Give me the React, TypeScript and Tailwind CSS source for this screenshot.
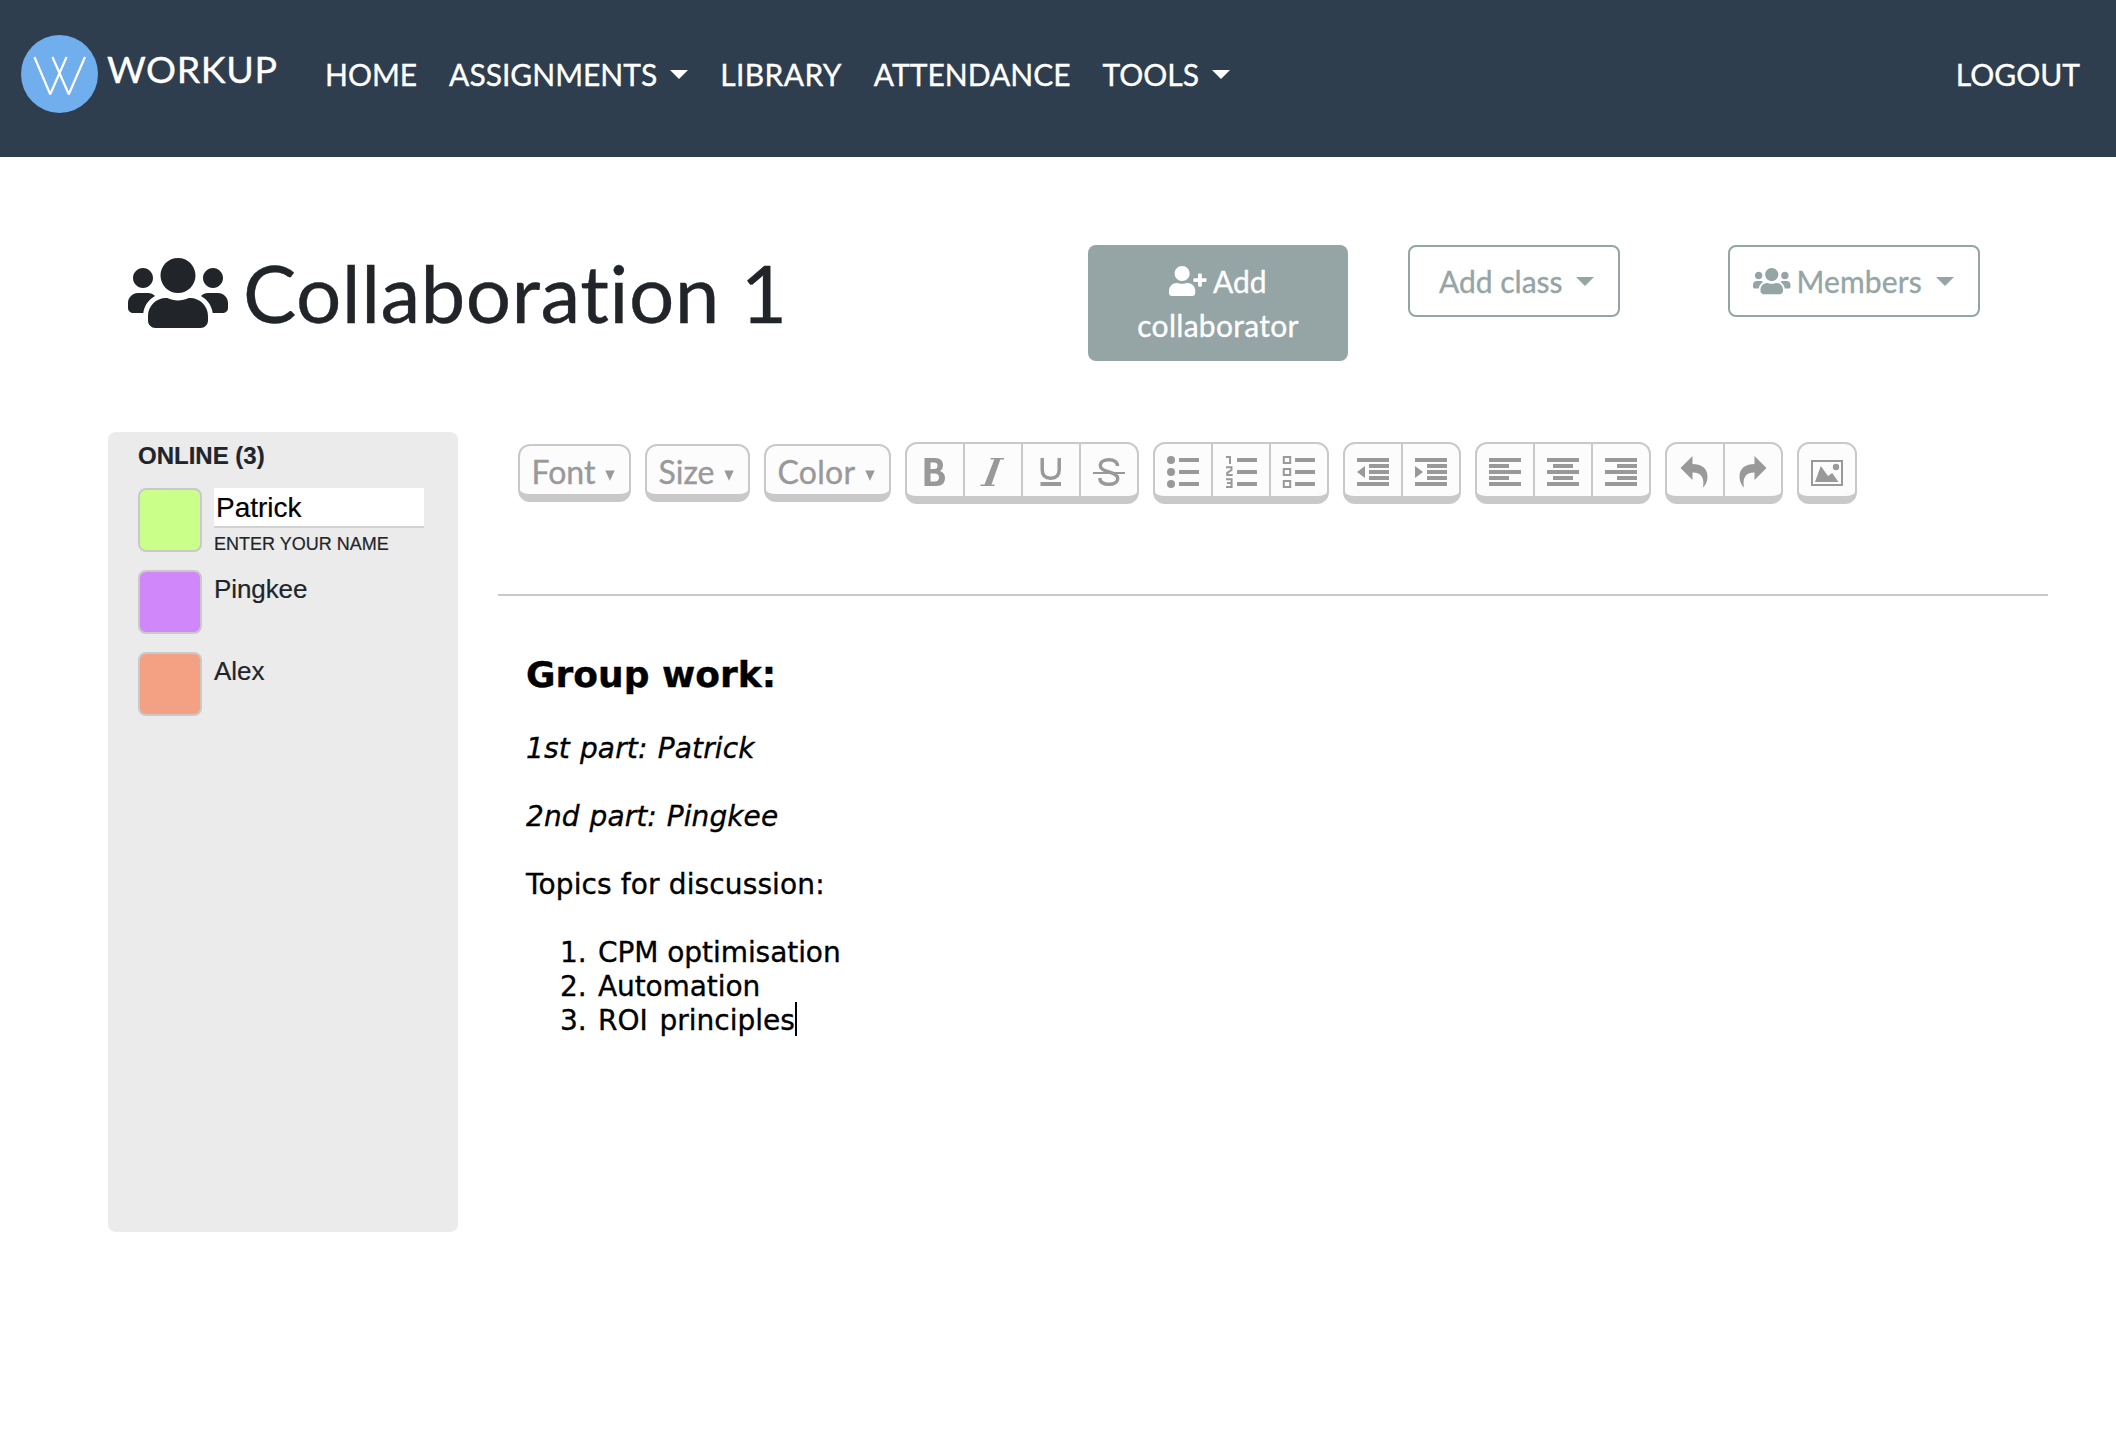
import type { ReactNode } from 'react';
import { FaUsers, FaUserPlus } from 'react-icons/fa';

const LATO = "font-['Lato',sans-serif] [font-variant-ligatures:none] [-webkit-text-stroke:0.35px_currentColor]";
const ARIAL = "font-['Liberation_Sans',Arial,sans-serif] [-webkit-text-stroke:0.2px_currentColor]";

function Caret() {
  return (
    <span className="inline-block h-0 w-0 border-x-[9px] border-t-[9px] border-x-transparent border-t-current" />
  );
}

function Logo() {
  return (
    <svg width="77" height="78" viewBox="0 0 77 78" className="shrink-0">
      <ellipse cx="38.5" cy="39" rx="38.5" ry="38.9" fill="#70aeee" />
      <path
        d="M13.4 22 L29.2 59.3 L45.6 22 M31.4 22 L47.8 59.3 L64 22"
        fill="none"
        stroke="#fff"
        strokeWidth="2.2"
        strokeLinejoin="bevel"
      />
    </svg>
  );
}

function MenuButton({ label, width, text = '' }: { label: string; width: string; text?: string }) {
  return (
    <button
      className={`flex h-[58px] items-start rounded-xl border-2 border-b-8 border-[#c9c9c9] bg-[#fcfcfc] text-[32px] text-[#999] ${width}`}
    >
      <span className={`ml-[11.5px] mt-[7px] leading-[38px] ${text}`}>{label}</span>
      <svg width="10" height="11" viewBox="0 0 10 11" className="ml-[9.5px] mt-6">
        <path d="M0.3 0.5H9.7L5 10.8Z" fill="#999" />
      </svg>
    </button>
  );
}

function Group({ children }: { children: ReactNode }) {
  return (
    <div className="flex h-[62px] divide-x-2 divide-[#c9c9c9] overflow-hidden rounded-xl border-2 border-b-8 border-[#c9c9c9] bg-[#fcfcfc]">
      {children}
    </div>
  );
}

function Tool({ children }: { children: ReactNode }) {
  return (
    <button className="box-content block h-[52px] w-[56px]">
      <svg width="56" height="52" viewBox="0 0 56 52" fill="#999">
        {children}
      </svg>
    </button>
  );
}

const ROWS = [14, 20, 26, 32, 38];

function Lines({ x, w }: { x: number[]; w: number[] }) {
  return (
    <>
      {ROWS.map((y, i) => (
        <rect key={y} x={x[i % 2]} y={y} width={w[i % 2]} height="4" />
      ))}
    </>
  );
}

function IndentLines() {
  return (
    <>
      {ROWS.map((y, i) => {
        const edge = i === 0 || i === 4;
        return <rect key={y} x={edge ? 12 : 24} y={y} width={edge ? 32 : 20} height="4" />;
      })}
    </>
  );
}

function ListBars() {
  return (
    <>
      {[14, 26, 38].map((y) => (
        <rect key={y} x="24" y={y} width="20" height="4" rx="0.6" />
      ))}
    </>
  );
}

const ARROW = 'M13.5 24 L25.5 12 V20 C34 20 40.5 24 40.5 32.5 C40.5 37 39 40.5 36 43.5 C37.5 34.5 35 28.5 25.5 28.5 V36 Z';

function Toolbar() {
  return (
    <div className={`flex items-center gap-[14px] ${LATO}`}>
      <MenuButton label="Font" width="w-[113px]" />
      <MenuButton label="Size" width="w-[105px]" />
      <MenuButton label="Color" width="w-[127px]" text="tracking-[0.25px]" />
      <Group>
        <Tool>
          <path
            fillRule="evenodd"
            d="M17.5 14 H28 C33.5 14 36 17 36 21 C36 24 35 26 33 27 C36 28 38 30.5 38 34 C38 39 35 42 29 42 H17.5 Z M23.5 18.5 V25 H27 C29.5 25 30.5 24 30.5 21.8 C30.5 19.5 29.5 18.5 27 18.5 Z M23.5 29.5 V37.5 H27.5 C30.5 37.5 32 36 32 33.5 C32 31 30.5 29.5 27.5 29.5 Z"
          />
        </Tool>
        <Tool>
          <path d="M25.5 14 H39 V15.6 H35.3 L26.5 40.4 H29.5 V42 H15.5 V40.4 H19.5 L29.3 15.6 H25.5 Z" />
        </Tool>
        <Tool>
          <path d="M19.2 14 V25.5 C19.2 31.5 22.5 34.2 27.7 34.2 C33 34.2 36.2 31.5 36.2 25.5 V14" fill="none" stroke="#999" strokeWidth="3.5" />
          <rect x="17.5" y="38" width="20.5" height="4" />
        </Tool>
        <Tool>
          <path
            d="M36.5 22 C36.5 18 33 15.7 28 15.7 C22.5 15.7 19.3 18 19.3 21.5 C19.3 25 22 26.5 28 28 C34 29.5 36.7 31 36.7 34.5 C36.7 38 33 40.3 28 40.3 C22.5 40.3 19 38 18.7 34"
            fill="none"
            stroke="#999"
            strokeWidth="3.4"
          />
          <rect x="12" y="28" width="32" height="2" />
        </Tool>
      </Group>
      <Group>
        <Tool>
          {[16, 28, 40].map((y) => (
            <circle key={y} cx="16" cy={y} r="4" />
          ))}
          <ListBars />
        </Tool>
        <Tool>
          <path
            d="M13 13 H17 V20 M13 23.2 H18.5 V26 L14.2 28.8 V31 H19.7 M13 35.2 H18.6 V43 H13 M14 39 H18.6"
            fill="none"
            stroke="#999"
            strokeWidth="2"
          />
          <ListBars />
        </Tool>
        <Tool>
          {[13, 25, 37].map((y) => (
            <rect key={y} x="12.8" y={y} width="6.4" height="6" fill="none" stroke="#999" strokeWidth="2" />
          ))}
          <ListBars />
        </Tool>
      </Group>
      <Group>
        <Tool>
          <IndentLines />
          <path d="M20 22 V34 L12 28 Z" />
        </Tool>
        <Tool>
          <IndentLines />
          <path d="M12 22 V34 L20 28 Z" />
        </Tool>
      </Group>
      <Group>
        <Tool>
          <Lines x={[12, 12]} w={[32, 20]} />
        </Tool>
        <Tool>
          <Lines x={[12, 18]} w={[32, 20]} />
        </Tool>
        <Tool>
          <Lines x={[12, 24]} w={[32, 20]} />
        </Tool>
      </Group>
      <Group>
        <Tool>
          <path d={ARROW} />
        </Tool>
        <Tool>
          <path d={ARROW} transform="translate(55 0) scale(-1 1)" />
        </Tool>
      </Group>
      <Group>
        <Tool>
          <rect x="13" y="17" width="30" height="24" fill="none" stroke="#999" strokeWidth="2" />
          <circle cx="37" cy="23" r="3.2" />
          <path d="M16 38 L21.8 22 L29 32 L33.2 29 L39.5 38 Z" />
        </Tool>
      </Group>
    </div>
  );
}

function Swatch({ color }: { color: string }) {
  return <div className={`h-16 w-16 shrink-0 rounded-lg border-2 border-[#c9c9c9] ${color}`} />;
}

function OnlinePanel() {
  return (
    <aside className={`h-[800px] w-[350px] shrink-0 rounded-lg bg-[#ebebeb] pl-[30px] pt-2 text-[#212529] ${ARIAL}`}>
      <h2 className="text-[24px] font-bold leading-[31px]">ONLINE (3)</h2>
      <ul className="mt-[17px] flex flex-col gap-[18px]">
        <li className="flex h-16 gap-3">
          <Swatch color="bg-[#caff8a]" />
          <div>
            <div className="h-10 w-[210px] border-b-2 border-[#d2d2d2] bg-white pl-0.5 text-[28px] leading-[40px] text-black">
              Patrick
            </div>
            <div className="mt-1.5 text-[18px] leading-[21px]">ENTER YOUR NAME</div>
          </div>
        </li>
        <li className="flex h-16 gap-3">
          <Swatch color="bg-[#cf87fa]" />
          <span className="text-[26px] leading-[38px] tracking-[-0.1px]">Pingkee</span>
        </li>
        <li className="flex h-16 gap-3">
          <Swatch color="bg-[#f4a083]" />
          <span className="text-[26px] leading-[38px]">Alex</span>
        </li>
      </ul>
    </aside>
  );
}

const TOPICS = [
  { text: 'CPM optimisation', spacing: 'tracking-[-0.06px]' },
  { text: 'Automation', spacing: 'tracking-[-0.1px]' },
  { text: 'ROI principles', spacing: '[word-spacing:2.8px]' },
];

function Editor() {
  return (
    <div className="ml-7 mt-[57px] font-['DejaVu_Sans',Verdana,sans-serif] text-[28px] leading-[34px] text-black">
      <h3 className="text-[36px] font-bold leading-[44px]">Group work:</h3>
      <p className="mt-[35px] italic tracking-[0.16px] [word-spacing:1px]">1st part: Patrick</p>
      <p className="mt-[34px] italic tracking-[0.08px] [word-spacing:1px]">2nd part: Pingkee</p>
      <p className="mt-[34px] tracking-[0.13px]">Topics for discussion:</p>
      <ol className="mt-[34px] pl-[34px]">
        {TOPICS.map(({ text, spacing }, i) => (
          <li key={text} className="flex">
            <span className="w-[38px]">{i + 1}.</span>
            <span className={spacing}>{text}</span>
            {i === 2 && <span className="-mt-0.5 h-[34px] w-0.5 bg-black" />}
          </li>
        ))}
      </ol>
    </div>
  );
}

export default function App() {
  return (
    <div className={`min-h-[1452px] w-[2116px] bg-white ${LATO}`}>
      <nav className="flex h-[157px] items-start bg-[#2f3e4e] pl-[21px] text-[30px] leading-[45px] text-white">
        <div className="flex w-[304px] items-start pt-[35px]">
          <Logo />
          <span className="ml-[9px] mt-1.5 text-[37.5px] leading-[56px] tracking-[0.6px]">WORKUP</span>
        </div>
        <div className="flex flex-1 gap-8 pt-[52px]">
          <a>HOME</a>
          <a className="flex items-center gap-[13px]">ASSIGNMENTS <Caret /></a>
          <a className="tracking-[0.38px]">LIBRARY</a>
          <a>ATTENDANCE</a>
          <a className="flex items-center gap-[13px]">TOOLS <Caret /></a>
        </div>
        <a className="pr-9 pt-[52px]">LOGOUT</a>
      </nav>

      <header className="flex h-[275px] items-start pl-[128px] pt-[88px] text-[30px] leading-[44px]">
        <h1 className="flex h-24 w-[960px] items-center gap-[15px] text-[80px] leading-[96px] text-[#212529]">
          <FaUsers className="h-20 w-[100px]" />
          <span className="-mt-[3px] tracking-[0.42px]">Collaboration 1</span>
        </h1>
        <button className="h-[116px] w-[260px] rounded-lg bg-[#95a5a6] text-center text-white">
          <span className="flex items-center justify-center gap-1.5">
            <FaUserPlus className="h-[30px] w-[37.5px]" />
            <span>Add</span>
          </span>
          <span className="block tracking-[0.3px]">collaborator</span>
        </button>
        <button className="ml-[60px] flex h-[72px] w-[212px] items-center rounded-lg border-2 border-[#95a5a6] pl-[29px] text-[#95a5a6]">
          <span className="mr-[13.5px]">Add class</span>
          <Caret />
        </button>
        <button className="ml-[108px] flex h-[72px] w-[252px] items-center rounded-lg border-2 border-[#95a5a6] pl-[23px] text-[#95a5a6]">
          <FaUsers className="mr-1.5 h-[30px] w-[37.5px]" />
          <span className="mr-[14px] tracking-[0.15px]">Members</span>
          <Caret />
        </button>
      </header>

      <main className="flex pl-[108px]">
        <OnlinePanel />
        <section className="ml-10 w-[1550px]">
          <div className="h-[164px] border-b-2 border-[#c9c9c9] pl-5 pt-2.5">
            <Toolbar />
          </div>
          <Editor />
        </section>
      </main>
    </div>
  );
}
